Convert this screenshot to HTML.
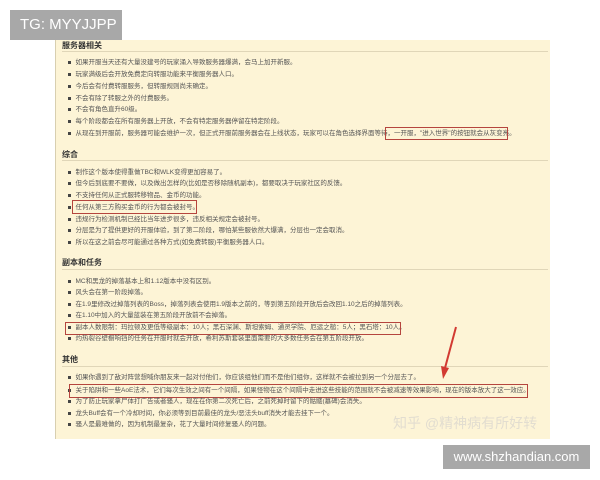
<!DOCTYPE html>
<html><head><meta charset="utf-8"><style>
*{margin:0;padding:0}
body{width:600px;height:480px;background:#fff;position:relative;overflow:hidden;font-family:"Liberation Sans","Noto Sans CJK SC",sans-serif}
#panel{position:absolute;left:55px;top:40px;width:494px;height:399px;background:#fdf4d6;border-left:1px solid #d8cfb0}
.h{position:absolute;left:62px;font-size:8px;font-weight:bold;color:#333;line-height:10px}
.u{position:absolute;left:62px;width:486px;height:1px;background:#e0d6b8}
.l{position:absolute;left:68px;font-size:6.5px;color:#555;line-height:10px;white-space:nowrap}
.l:before{content:"";display:inline-block;width:2.5px;height:2.5px;background:#444;margin-right:5px;vertical-align:middle}
.b{position:absolute;border:1.3px solid #b5453e}
#tg{position:absolute;left:10px;top:10px;width:112px;height:30px;background:#a8a8a8;color:#fff;font-size:15px;line-height:30px;text-indent:10px}
#wm{position:absolute;left:443px;top:445px;width:147px;height:24px;background:#a8a8a8;color:#fff;font-size:13px;line-height:24px;text-align:center}
#zh{position:absolute;left:393px;top:413px;font-size:14px;color:#e2ddd0;white-space:nowrap}
</style></head><body>
<div id="panel"></div>
<div class="h" style="top:41px">服务器相关</div><div class="u" style="top:51px"></div>
<div class="l" style="top:58px">如果开服当天还有大量没建号的玩家涌入导致服务器爆满，会马上加开新服。</div>
<div class="l" style="top:70px">玩家满级后会开放免费定向转服功能来平衡服务器人口。</div>
<div class="l" style="top:82px">今后会有付费转服服务，但转服规则尚未确定。</div>
<div class="l" style="top:94px">不会有除了转服之外的付费服务。</div>
<div class="l" style="top:105px">不会有角色直升60级。</div>
<div class="l" style="top:117px">每个阶段都会在所有服务器上开放，不会有特定服务器停留在特定阶段。</div>
<div class="l" style="top:129px">从现在到开服前，服务器可能会维护一次，但正式开服前服务器会在上线状态，玩家可以在角色选择界面等待，一开服，"进入世界"的按钮就会从灰变亮。</div>
<div class="b" style="left:385px;top:127px;width:121px;height:11px"></div>
<div class="h" style="top:150px">综合</div><div class="u" style="top:160px"></div>
<div class="l" style="top:168px">制作这个版本使得重做TBC和WLK变得更加容易了。</div>
<div class="l" style="top:179px">但今后到底要不要做，以及做出怎样的(比如是否移除随机副本)，都要取决于玩家社区的反馈。</div>
<div class="l" style="top:191px">不支持任何从正式服转移物品、金币的功能。</div>
<div class="l" style="top:203px">任何从第三方购买金币的行为都会被封号。</div>
<div class="b" style="left:72px;top:200px;width:123px;height:12px"></div>
<div class="l" style="top:215px">违规行为检测机制已经比当年进步很多，违反相关规定会被封号。</div>
<div class="l" style="top:226px">分层是为了提供更好的开服体验，到了第二阶段，哪怕某些服依然大爆满，分层也一定会取消。</div>
<div class="l" style="top:238px">所以在这之前会尽可能通过各种方式(如免费转服)平衡服务器人口。</div>
<div class="h" style="top:258px">副本和任务</div><div class="u" style="top:269px"></div>
<div class="l" style="top:277px">MC和黑龙的掉落基本上和1.12版本中没有区别。</div>
<div class="l" style="top:288px">风头会在第一阶段掉落。</div>
<div class="l" style="top:300px">在1.9里修改过掉落列表的Boss，掉落列表会使用1.9版本之前的，等到第五阶段开放后会改回1.10之后的掉落列表。</div>
<div class="l" style="top:311px">在1.10中加入的大量蓝装在第五阶段开放前不会掉落。</div>
<div class="l" style="top:323px">副本人数限制：玛拉顿及更低等级副本：10人；黑石深渊、斯坦索姆、通灵学院、厄运之槌：5人；黑石塔：10人。</div>
<div class="b" style="left:65px;top:322px;width:334px;height:11px"></div>
<div class="l" style="top:334px">灼热裂谷壁橱响铛的任务在开服时就会开放，希利苏斯套装里面需要的大多数任务会在第五阶段开放。</div>
<div class="h" style="top:355px">其他</div><div class="u" style="top:366px"></div>
<div class="l" style="top:373px">如果你遇到了敌对阵营想喊你朋友来一起对付他们，你应该组他们而不是他们组你，这样就不会被拉到另一个分层去了。</div>
<div class="l" style="top:386px">关于陷阱和一些AoE法术，它们每次生效之间有一个间隔，如果怪物在这个间隔中走进这些技能的范围就不会被减速等效果影响，现在的版本放大了这一效应。</div>
<div class="b" style="left:69px;top:384px;width:457px;height:12px"></div>
<div class="l" style="top:397px">为了防止玩家拿尸体打广告或者骚人，现在在你第二次死亡后，之前死掉时留下的骷髅(墓碑)会消失。</div>
<div class="l" style="top:409px">龙头Buff会有一个冷却时间，你必须等到目前最佳的龙头/恶法头buff消失才能去挂下一个。</div>
<div class="l" style="top:420px">骚人是最难做的，因为机制最复杂，花了大量时间修复骚人的问题。</div>
<div id="zh">知乎 @精神病有所好转</div>
<svg style="position:absolute;left:0;top:0" width="600" height="480"><line x1="456" y1="327" x2="445" y2="368" stroke="#d23a32" stroke-width="2"/><polygon points="441,366 449,368 443,379" fill="#d23a32"/></svg>
<div id="tg">TG: MYYJJPP</div>
<div id="wm">www.shzhandian.com</div>
</body></html>
